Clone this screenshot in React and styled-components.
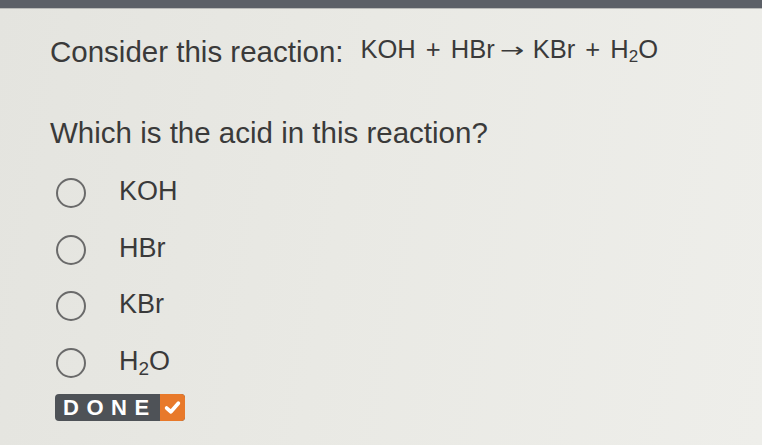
import React from 'react';
import styled, { createGlobalStyle } from 'styled-components';

const GlobalStyle = createGlobalStyle`
    html, body {
        margin: 0;
        padding: 0;
    }

    body {
        width: 762px;
        height: 445px;
        overflow: hidden;
        background: linear-gradient(100deg, #e4e4df 0%, #e9e9e4 45%, #eeeeea 100%);
        font-family: 'Liberation Sans', Arial, sans-serif;
        color: #3a3a3a;
    }
`;

const TopBar = styled.div`
    height: 8px;
    background-color: #5c6067;
    border-bottom: 1px solid #b9bab8;
`;

const Question = styled.div`
    padding: 26px 0 0 50px;
    display: flex;
    flex-direction: column;
`;

const Prompt = styled.p`
    margin: 0;
    font-size: 29.5px;
    line-height: 34px;
    white-space: nowrap;
    margin-top: ${props => props.spaced ? '44px' : '0'};
`;

const Equation = styled.span`
    font-size: 25.5px;
    margin-left: 17px;
    position: relative;
    top: -4px;
    word-spacing: 3px;

    sub {
        font-size: 17px;
        vertical-align: -4px;
        line-height: 0;
    }
`;

const Arrow = styled.span`
    display: inline-block;
    width: 26px;
    margin: 0 7px 0 5px;
    font-family: 'DejaVu Sans', sans-serif;
    font-size: 20px;
    transform: scaleX(1.45) translateY(-1px);
    transform-origin: left center;
`;

const Choices = styled.ul`
    list-style: none;
    margin: 26px 0 0 0;
    padding: 0 0 0 6px;
    display: flex;
    flex-direction: column;
    gap: 26.5px;
`;

const Choice = styled.li`
    height: 30px;
    display: flex;
    align-items: center;
    gap: 33px;
`;

const Radio = styled.span`
    width: 26px;
    height: 26px;
    border-radius: 50%;
    border: 2.5px solid #6a6a6a;
    margin-top: 4px;
    flex-shrink: 0;
`;

const Label = styled.span`
    font-size: 27px;
    line-height: 30px;

    sub {
        font-size: 19px;
        vertical-align: -5px;
        line-height: 0;
    }
`;

const DoneButton = styled.button`
    margin: 18px 0 0 5px;
    align-self: flex-start;
    height: 27px;
    padding: 0;
    border: none;
    border-radius: 4px;
    overflow: hidden;
    display: flex;
    align-items: stretch;
    background-color: #4e5257;
    cursor: pointer;

    .text {
        display: flex;
        align-items: center;
        padding: 1px 3px 0 8px;
        font-family: 'Liberation Sans', Arial, sans-serif;
        font-weight: bold;
        font-size: 22px;
        letter-spacing: 7.5px;
        color: #ffffff;
    }

    .icon {
        width: 25px;
        display: flex;
        justify-content: center;
        align-items: center;
        background-color: #e8792a;

        svg {
            width: 17px;
            height: 15px;
            stroke: #ffffff;
            stroke-width: 3.5;
            stroke-linecap: round;
            stroke-linejoin: round;
            fill: none;
        }
    }
`;

const choices = [
    { id: 'koh', label: <>KOH</> },
    { id: 'hbr', label: <>HBr</> },
    { id: 'kbr', label: <>KBr</> },
    { id: 'h2o', label: <>H<sub>2</sub>O</> },
];

const App = () => {
    return (
        <>
            <GlobalStyle />
            <TopBar />
            <Question>
                <Prompt>
                    Consider this reaction:
                    <Equation>
                        KOH + HBr<Arrow>→</Arrow>KBr + H<sub>2</sub>O
                    </Equation>
                </Prompt>
                <Prompt spaced>Which is the acid in this reaction?</Prompt>
                <Choices>
                    {choices.map(choice => (
                        <Choice key={choice.id}>
                            <Radio />
                            <Label>{choice.label}</Label>
                        </Choice>
                    ))}
                </Choices>
                <DoneButton>
                    <span className='text'>DONE</span>
                    <span className='icon'>
                        <svg viewBox='0 0 16 14'>
                            <polyline points='2.5,7.5 6.5,11 13.5,3' />
                        </svg>
                    </span>
                </DoneButton>
            </Question>
        </>
    );
};

export default App;
